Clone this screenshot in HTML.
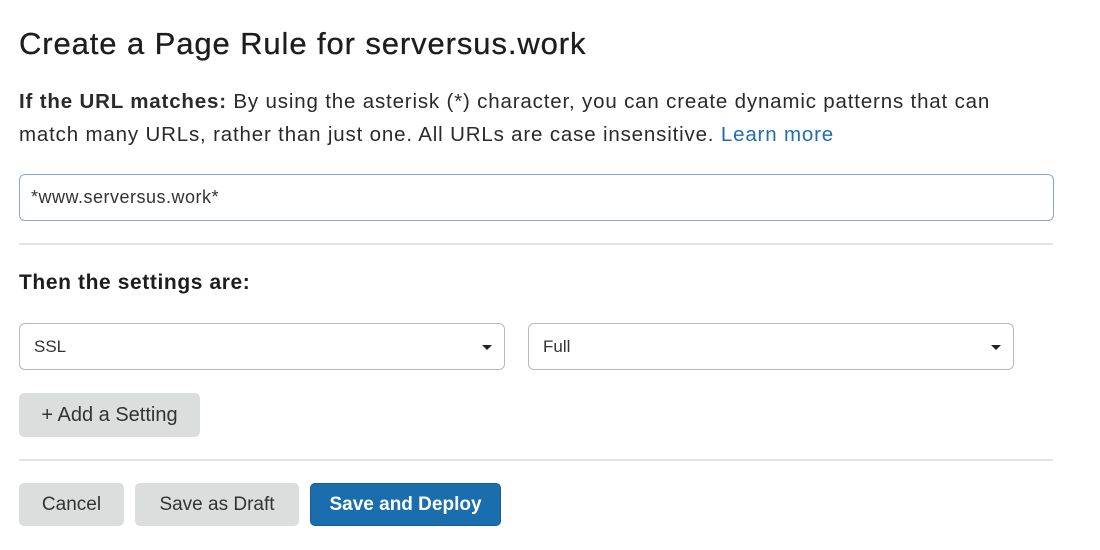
<!DOCTYPE html>
<html><head><style>
body{margin:0;width:1100px;height:550px;background:#fff;font-family:"Liberation Sans",sans-serif;color:#222;position:relative;overflow:hidden}
.a{position:absolute}
h1{position:absolute;left:19px;top:26px;margin:0;font-size:31px;font-weight:normal;color:#1d1d1d;letter-spacing:0.9px;-webkit-text-stroke:0.3px #1d1d1d}
p{position:absolute;left:19px;top:85px;margin:0;font-size:20.5px;line-height:33px;width:1005px;color:#2a2a2a;letter-spacing:0.83px}
.box{position:absolute;box-sizing:border-box;border-radius:6px;background:#fff;font-size:17px;color:#333;padding-left:14px;display:flex;align-items:center}
.hr{position:absolute;left:19px;width:1034px;height:2px;background:#e4e4e4}
.btn{position:absolute;box-sizing:border-box;border-radius:5px;background:#dcdddd;font-size:19px;color:#333;display:flex;align-items:center;justify-content:center;top:483px;height:43px}
.car{position:absolute;right:12px;top:21px;width:0;height:0;border-left:5px solid transparent;border-right:5px solid transparent;border-top:5px solid #222}
</style></head><body>
<h1>Create a Page Rule for serversus.work</h1>
<p><b>If the URL matches:</b> By using the asterisk (*) character, you can create dynamic patterns that can match many URLs, rather than just one. All URLs are case insensitive. <span style="color:#1f6fad">Learn more</span></p>
<div class="box" style="left:19px;top:174px;width:1035px;height:47px;border:1.5px solid #8aa6cc;padding-left:11px;font-size:18px;letter-spacing:0.5px">*www.serversus.work*</div>
<div class="hr" style="top:243px"></div>
<div class="a" style="left:19px;top:271px;font-size:21px;font-weight:bold;color:#1d1d1d;letter-spacing:0.6px">Then the settings are:</div>
<div class="box" style="left:19px;top:323px;width:486px;height:47px;border:1.5px solid #b8b8b8">SSL<div class="car"></div></div>
<div class="box" style="left:528px;top:323px;width:486px;height:47px;border:1.5px solid #b8b8b8">Full<div class="car"></div></div>
<div class="btn" style="left:19px;top:393px;width:181px;height:44px;font-size:20px">+ Add a Setting</div>
<div class="hr" style="top:459px"></div>
<div class="btn" style="left:19px;width:105px">Cancel</div>
<div class="btn" style="left:135px;width:164px">Save as Draft</div>
<div class="btn" style="left:310px;width:191px;background:#1a6eae;color:#fff;font-weight:bold;border:1px solid #155d94">Save and Deploy</div>
</body></html>
